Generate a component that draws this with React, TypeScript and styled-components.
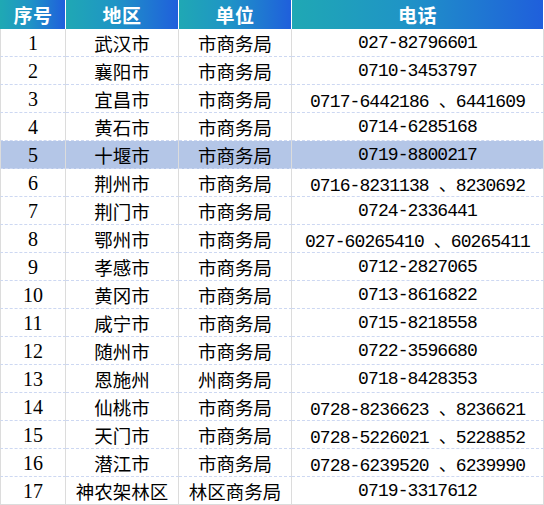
import React from "react";
import styled, { createGlobalStyle, css } from "styled-components";

const GlobalStyle = createGlobalStyle`
  html, body { margin: 0; padding: 0; background: #ffffff; }
  body { font-family: "Noto Sans CJK SC", "Noto Sans", sans-serif; }
`;

const Table = styled.div`
  display: grid;
  grid-template-columns: 66px 113px 113px 252px;
  width: 544px;
`;

const HeadCell = styled.div<{ $first?: boolean }>`
  height: 29px;
  box-sizing: border-box;
  display: flex;
  align-items: center;
  justify-content: center;
  background: linear-gradient(90deg, #1fa8b4 0%, #1f94c6 45%, #1f5fdc 100%);
  border-right: 1px solid #ffffff;
  ${(p) => p.$first && css`border-left: 1px solid #1fa8b4;`}
  color: #ffffff;
  font-family: "Noto Sans CJK SC", sans-serif;
  font-weight: 700;
  font-size: 19px;
  letter-spacing: 0.5px;
`;

const Cell = styled.div<{ $first?: boolean; $hl?: boolean; $last?: boolean }>`
  height: 28px;
  box-sizing: border-box;
  display: flex;
  align-items: center;
  justify-content: center;
  border-right: 1px solid #dcdcdc;
  ${(p) => p.$first && css`border-left: 1px solid #dcdcdc;`}
  border-bottom: ${(p) => (p.$last ? "1px solid #dcdcdc" : "1px dashed #cdd8f2")};
  background: ${(p) => (p.$hl ? "#b4c6e7" : "#ffffff")};
  color: #000000;
  font-family: "Noto Sans CJK SC", sans-serif;
  font-size: 18.5px;
  font-weight: 400;
  white-space: nowrap;
  padding-top: 1px;
`;

const NumText = styled.span`
  font-family: "Liberation Serif", serif;
  font-size: 20px;
`;

const PhoneText = styled.span`
  font-family: "Liberation Mono", "Noto Sans CJK SC", monospace;
  font-size: 18px;
  letter-spacing: -0.9px;
`;

const rows: [string, string, string][] = [
  ["武汉市", "市商务局", "027-82796601"],
  ["襄阳市", "市商务局", "0710-3453797"],
  ["宜昌市", "市商务局", "0717-6442186 、6441609"],
  ["黄石市", "市商务局", "0714-6285168"],
  ["十堰市", "市商务局", "0719-8800217"],
  ["荆州市", "市商务局", "0716-8231138 、8230692"],
  ["荆门市", "市商务局", "0724-2336441"],
  ["鄂州市", "市商务局", "027-60265410 、60265411"],
  ["孝感市", "市商务局", "0712-2827065"],
  ["黄冈市", "市商务局", "0713-8616822"],
  ["咸宁市", "市商务局", "0715-8218558"],
  ["随州市", "市商务局", "0722-3596680"],
  ["恩施州", "州商务局", "0718-8428353"],
  ["仙桃市", "市商务局", "0728-8236623 、8236621"],
  ["天门市", "市商务局", "0728-5226021 、5228852"],
  ["潜江市", "市商务局", "0728-6239520 、6239990"],
  ["神农架林区", "林区商务局", "0719-3317612"],
];

export default function App() {
  return (
    <>
      <GlobalStyle />
      <Table>
        <HeadCell $first>序号</HeadCell>
        <HeadCell>地区</HeadCell>
        <HeadCell>单位</HeadCell>
        <HeadCell>电话</HeadCell>
        {rows.map(([area, unit, phone], i) => {
          const hl = i === 4;
          const last = i === rows.length - 1;
          return (
            <React.Fragment key={i}>
              <Cell $first $hl={hl} $last={last}>
                <NumText>{i + 1}</NumText>
              </Cell>
              <Cell $hl={hl} $last={last}>{area}</Cell>
              <Cell $hl={hl} $last={last}>{unit}</Cell>
              <Cell $hl={hl} $last={last}>
                <PhoneText>{phone}</PhoneText>
              </Cell>
            </React.Fragment>
          );
        })}
      </Table>
    </>
  );
}
